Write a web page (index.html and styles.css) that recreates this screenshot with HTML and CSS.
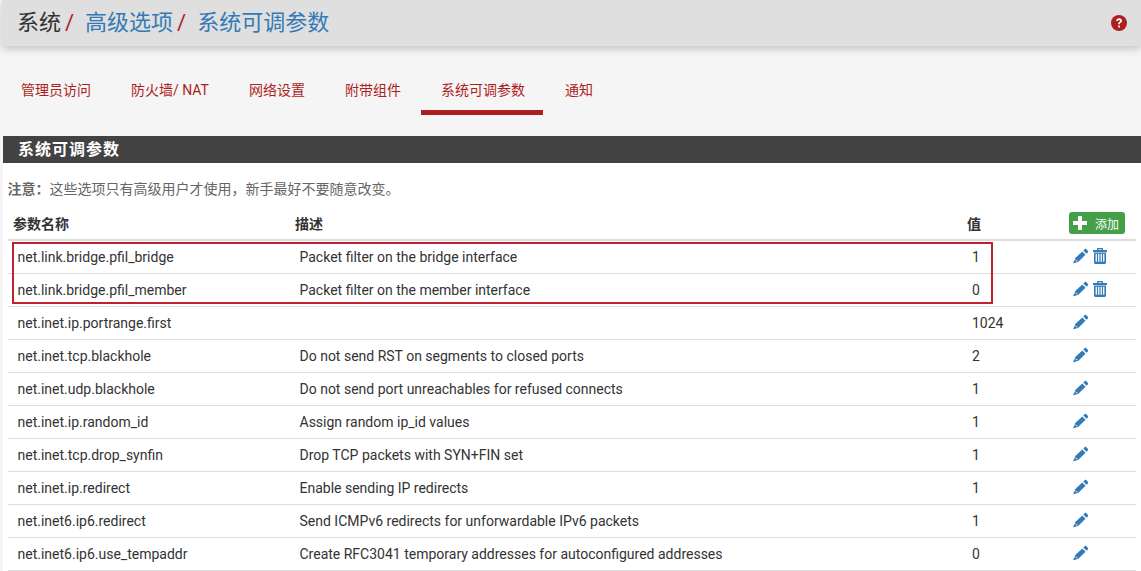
FILE: index.html
```html
<!DOCTYPE html>
<html lang="zh-CN">
<head>
  <meta charset="UTF-8">
  <title>系统 / 高级选项 / 系统可调参数</title>
  <link rel="stylesheet" href="styles.css">
</head>
<body>

<svg class="icon-defs" width="0" height="0">
  <symbol id="i-pencil" viewBox="0 0 16 16">
    <path d="M11.6 1.200c.5-.5 1.200-.5 1.700 0l1.500 1.500c.5.5.5 1.200 0 1.700l-1.300 1.300-3.200-3.200zM9.300 3.500l3.200 3.200-7.600 7.600-.9-.9.3-1.500-1.500.3-.5-.5-.3-1.400z"/>
    <path d="M1.900 11.500l2.600 2.600-3.800 1.200c-.3.100-.6-.2-.5-.5z"/>
  </symbol>
  <symbol id="i-trash" viewBox="0 0 14 16">
    <path fill-rule="evenodd" d="M4 2V1c0-.6.400-1 1-1h4c.6 0 1 .4 1 1v1h3.500c.3 0 .5.200.5.500V4H0V2.500C0 2.200.2 2 .5 2zM5.400 2h3.200v-.8H5.400zM1 4.500h12V14.500c0 .9-.7 1.500-1.500 1.500h-9C1.700 16 1 15.400 1 14.500zM2.600 5.800v8h1.300v-8zM5.100 5.800v8h1.300v-8zM7.600 5.800v8h1.300v-8zM10.100 5.800v8h1.300v-8z"/>
  </symbol>
</svg>

<header class="topbar">
  <h1 class="crumbs">
    <span>系统</span><i>/</i>
    <a href="#">高级选项</a><i>/</i>
    <a href="#" class="last">系统可调参数</a>
  </h1>
  <a href="#" class="help">
    <svg viewBox="0 0 16 16" width="16" height="16">
      <circle cx="8" cy="8" r="8" fill="#ac1e23"/>
      <path d="M5.200 6c.1-1.700 1.300-2.700 2.900-2.700 1.700 0 2.900 1 2.900 2.400 0 1.100-.6 1.600-1.300 2.100-.6.400-.9.600-.9 1.300v.2H7.200v-.4c0-1.100.5-1.600 1.100-2 .5-.4.800-.6.800-1.100 0-.5-.4-.8-1-.8-.7 0-1.100.4-1.200 1.100z" fill="#fff"/>
      <rect x="7.200" y="10.500" width="1.700" height="2" fill="#fff"/>
    </svg>
  </a>
</header>

<nav class="tabs">
  <a href="#">管理员访问</a>
  <a href="#">防火墙/ NAT</a>
  <a href="#">网络设置</a>
  <a href="#">附带组件</a>
  <a href="#" class="active">系统可调参数</a>
  <a href="#">通知</a>
</nav>

<section class="panel">
  <h2 class="panel-title">系统可调参数</h2>
  <div class="panel-body">
    <p class="note"><b>注意：</b>这些选项只有高级用户才使用，新手最好不要随意改变。</p>
    <div class="table-wrap">
      <table>
        <thead>
          <tr>
            <th class="col-name">参数名称</th>
            <th class="col-desc">描述</th>
            <th class="col-val">值</th>
            <th class="col-act">
              <a href="#" class="btn-add">
                <svg viewBox="0 0 14 14" width="14" height="14"><path d="M5 0h4v5h5v4H9v5H5V9H0V5h5z" fill="#fff"/></svg>
                添加
              </a>
            </th>
          </tr>
        </thead>
        <tbody>
          <tr><td>net.link.bridge.pfil_bridge</td><td>Packet filter on the bridge interface</td><td>1</td><td class="acts"><svg class="ic"><use href="#i-pencil"/></svg><svg class="ic trash"><use href="#i-trash"/></svg></td></tr>
          <tr><td>net.link.bridge.pfil_member</td><td>Packet filter on the member interface</td><td>0</td><td class="acts"><svg class="ic"><use href="#i-pencil"/></svg><svg class="ic trash"><use href="#i-trash"/></svg></td></tr>
          <tr><td>net.inet.ip.portrange.first</td><td></td><td>1024</td><td class="acts"><svg class="ic"><use href="#i-pencil"/></svg></td></tr>
          <tr><td>net.inet.tcp.blackhole</td><td>Do not send RST on segments to closed ports</td><td>2</td><td class="acts"><svg class="ic"><use href="#i-pencil"/></svg></td></tr>
          <tr><td>net.inet.udp.blackhole</td><td>Do not send port unreachables for refused connects</td><td>1</td><td class="acts"><svg class="ic"><use href="#i-pencil"/></svg></td></tr>
          <tr><td>net.inet.ip.random_id</td><td>Assign random ip_id values</td><td>1</td><td class="acts"><svg class="ic"><use href="#i-pencil"/></svg></td></tr>
          <tr><td>net.inet.tcp.drop_synfin</td><td>Drop TCP packets with SYN+FIN set</td><td>1</td><td class="acts"><svg class="ic"><use href="#i-pencil"/></svg></td></tr>
          <tr><td>net.inet.ip.redirect</td><td>Enable sending IP redirects</td><td>1</td><td class="acts"><svg class="ic"><use href="#i-pencil"/></svg></td></tr>
          <tr><td>net.inet6.ip6.redirect</td><td>Send ICMPv6 redirects for unforwardable IPv6 packets</td><td>1</td><td class="acts"><svg class="ic"><use href="#i-pencil"/></svg></td></tr>
          <tr><td>net.inet6.ip6.use_tempaddr</td><td>Create RFC3041 temporary addresses for autoconfigured addresses</td><td>0</td><td class="acts"><svg class="ic"><use href="#i-pencil"/></svg></td></tr>
        </tbody>
      </table>
      <div class="highlight"></div>
    </div>
  </div>
</section>

</body>
</html>
```

FILE: styles.css
```css
html, body {
  height: 571px;
  overflow: hidden;
}
body {
  margin: 0;
  background: #f5f5f5;
  font-family: Roboto, "Noto Sans CJK SC", sans-serif;
  font-size: 14px;
  color: #333;
}
a {
  text-decoration: none;
}
.icon-defs {
  display: block;
  height: 0;
}

.topbar {
  display: flex;
  align-items: center;
  justify-content: space-between;
  height: 46px;
  margin-left: 2px;
  padding: 0 14px 0 15px;
  background: #dfdfdf;
  box-shadow: 0 3px 8px rgba(0,0,0,0.2);
}
.crumbs {
  margin: 0;
  font-size: 22px;
  font-weight: 400;
  line-height: 46px;
  white-space: nowrap;
}
.crumbs i {
  margin: 0 5.5px 0 4px;
  color: #ac1e23;
  font-style: normal;
}
.crumbs a {
  color: #337ab7;
}
.help {
  display: flex;
}

.tabs {
  display: flex;
  height: 69px;
  padding: 0 0 0 1px;
}
.tabs a {
  height: 69px;
  padding: 35px 20px 0;
  box-sizing: border-box;
  color: #ac1e23;
  font-size: 14px;
  line-height: 18px;
  white-space: nowrap;
}
.tabs a.active {
  margin-right: 2px;
  padding-right: 18px;
  border-bottom: 5px solid #ac1e23;
}

.panel {
  margin: 21px 0 0 3px;
  background: #fff;
}
.panel-title {
  margin: 0;
  height: 27px;
  padding-left: 15px;
  background: #424242;
  color: #fff;
  font-size: 16px;
  font-weight: 700;
  letter-spacing: 1px;
  line-height: 27px;
}
.panel-body {
  padding: 0 5px;
}
.note {
  margin: 0 0 0 -0.5px;
  padding-top: 17px;
  height: 37px;
  box-sizing: border-box;
  color: #666;
  font-size: 14px;
  line-height: 18px;
}
.note b {
  font-weight: 700;
}

.table-wrap {
  position: relative;
  width: 1128px;
}
table {
  width: 1128px;
  table-layout: fixed;
  border-collapse: collapse;
}
th {
  height: 40px;
  padding: 7px 5px 0;
  box-sizing: border-box;
  border-bottom: 2px solid #ddd;
  font-size: 14px;
  font-weight: 700;
  text-align: left;
}
.col-name { width: 282px; }
.col-desc { width: 672px; }
.col-val { width: 102px; }
td {
  height: 33px;
  padding: 0 0 0 9.5px;
  box-sizing: border-box;
  border-bottom: 1px solid #ddd;
  font-size: 14px;
  white-space: nowrap;
}
td:nth-child(3) {
  padding-left: 10px;
}
.btn-add {
  display: inline-flex;
  align-items: center;
  gap: 8px;
  width: 56px;
  height: 22px;
  box-sizing: border-box;
  padding-left: 4px;
  background: #43a047;
  border-radius: 3px;
  color: #fff;
  font-size: 12px;
  font-weight: 400;
}
.acts {
  padding: 0 0 2px 9px;
  font-size: 0;
  vertical-align: middle;
}
.ic {
  width: 16px;
  height: 16px;
  fill: #337ab7;
}
.ic.trash {
  width: 14px;
  margin-left: 4px;
}
.highlight {
  position: absolute;
  left: 4px;
  top: 42px;
  width: 981px;
  height: 62px;
  box-sizing: border-box;
  border: 2px solid #c0202f;
}
```
